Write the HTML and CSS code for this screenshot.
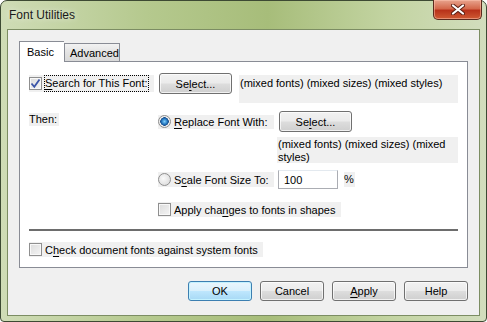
FILE: index.html
```html
<!DOCTYPE html>
<html lang="en">
<head>
  <meta charset="UTF-8">
  <title>Font Utilities</title>
  <link rel="stylesheet" href="styles.css">
</head>
<body>
  <div class="window">
    <div class="titlebar">
      <span class="title">Font Utilities</span>
      <div class="close">
        <svg width="14" height="11" viewBox="0 0 14 11">
          <path d="M2 1.5 L12 9.5 M12 1.5 L2 9.5" stroke="#5a1e12" stroke-width="4" stroke-linecap="round"/>
          <path d="M2 1.5 L12 9.5 M12 1.5 L2 9.5" stroke="#ffffff" stroke-width="2.2" stroke-linecap="round"/>
        </svg>
      </div>
    </div>

    <div class="client">
      <div class="tabs">
        <div class="tab active">Basic</div>
        <div class="tab">Advanced</div>
      </div>

      <div class="panel">
        <div class="search-row">
          <label class="chk search">
            <span class="box">
              <svg width="11" height="11" viewBox="0 0 11 11"><path d="M1.5 5.5 L4.3 8.8 L9.5 1.5" fill="none" stroke="#3b55a8" stroke-width="1.8"/></svg>
            </span>
            <span class="focus-text"><u>S</u>earch for This Font:</span>
          </label>
          <div class="btn select"><span>Se<u>l</u>ect...</span></div>
          <div class="mixed">(mixed fonts) (mixed sizes) (mixed styles)</div>
        </div>

        <div class="then-block">
          <div class="then">Then:</div>
          <div class="options">
            <div class="opt-row">
              <label class="radio-label"><span class="radio on"></span><span><u>R</u>eplace Font With:</span></label>
              <div class="btn select"><span>Se<u>l</u>ect...</span></div>
            </div>
            <div class="mixed mixed2">(mixed fonts) (mixed sizes) (mixed styles)</div>
            <div class="opt-row scale-row">
              <label class="radio-label"><span class="radio"></span><span>S<u>c</u>ale Font Size To:</span></label>
              <input class="field" type="text" value="100">
              <span class="pct">%</span>
            </div>
            <label class="chk shapes"><span class="box"></span><span>Apply cha<u>n</u>ges to fonts in shapes</span></label>
          </div>
        </div>

        <div class="sep"></div>

        <label class="chk doc"><span class="box"></span><span>C<u>h</u>eck document fonts against system fonts</span></label>
      </div>

      <div class="actions">
        <div class="btn default">OK</div>
        <div class="btn">Cancel</div>
        <div class="btn"><span><u>A</u>pply</span></div>
        <div class="btn">Help</div>
      </div>
    </div>
  </div>
</body>
</html>
```

FILE: styles.css
```css
* { box-sizing: border-box; }
body {
  margin: 0;
  font-family: 'Liberation Sans', Arial, sans-serif;
  font-size: 11px;
  color: #000;
  background: #fff;
}
u { text-decoration-thickness: 1px; text-underline-offset: 2px; }

.window {
  width: 487px;
  height: 322px;
  display: flex;
  flex-direction: column;
  padding: 0 6px 5px;
  border: 1px solid #3d4a33;
  border-radius: 7px 7px 4px 4px;
  background: linear-gradient(90deg, #cfdcb6 0%, #b5c98e 30%, #a7bd7a 55%, #c3d4a2 80%, #d2ddbd 100%);
}
.titlebar {
  height: 28px;
  display: flex;
  justify-content: space-between;
  align-items: flex-start;
}
.title {
  padding: 7px 0 0 2px;
  font-size: 12px;
  color: #1a1a1a;
  text-shadow: 0 0 6px rgba(255,255,255,0.8);
}
.close {
  width: 49px;
  height: 20px;
  margin: -1px -2px 0 0;
  display: flex;
  align-items: center;
  justify-content: center;
  border: 1px solid #5b2a1e;
  border-top: none;
  border-radius: 0 0 5px 5px;
  background: linear-gradient(#e8a48e 0%, #d4694c 45%, #b8321a 55%, #cf5a33 100%);
  box-shadow: inset 0 0 0 1px rgba(255,200,180,0.5);
}

.client {
  flex: 1;
  display: flex;
  flex-direction: column;
  padding: 11px 11px 0;
  border: 1px solid #7c8d63;
  background: #f0f0f0;
}

.tabs {
  display: flex;
  align-items: flex-end;
  height: 20px;
}
.tab {
  height: 18px;
  padding: 3px 0 0 5px;
  width: 56px;
  border: 1px solid #898c95;
  border-bottom: none;
  background: linear-gradient(#f2f2f2, #e3e3e3 50%, #d9d9d9);
}
.tab.active {
  width: 45px;
  height: 21px;
  padding: 4px 0 0 7px;
  margin-bottom: -1px;
  border-right: none;
  background: #fff;
  position: relative;
  z-index: 1;
}

.panel {
  height: 207px;
  padding: 11px 8px 0 9px;
  border: 1px solid #898c95;
  background: #fff;
}

.chk, .radio-label, .mixed, .then, .pct {
  background: #f0f0f0;
  white-space: nowrap;
}
.chk {
  display: flex;
  align-items: center;
  gap: 3px;
  height: 15px;
}
.box {
  width: 13px;
  height: 13px;
  flex: none;
  display: flex;
  align-items: center;
  justify-content: center;
  border: 1px solid #8f8f8f;
  background: linear-gradient(135deg, #dcdcdc, #f4f4f4);
  box-shadow: inset 0 0 0 1px #f8f8f8;
}

.search-row {
  display: flex;
  align-items: flex-start;
  height: 30px;
}
.chk.search {
  width: 125px;
  height: 17px;
  margin-top: 2px;
  gap: 2px;
}
.focus-text {
  height: 17px;
  line-height: 16px;
  padding: 0 1px;
  outline: 1px dotted #000;
  outline-offset: -1px;
}

.btn {
  height: 20px;
  width: 64px;
  display: flex;
  align-items: center;
  justify-content: center;
  border: 1px solid #707070;
  border-radius: 3px;
  background: linear-gradient(#f2f2f2 0%, #ebebeb 48%, #dddddd 52%, #cfcfcf 100%);
  box-shadow: inset 0 0 0 1px rgba(255,255,255,0.7);
}
.btn.select {
  width: 73px;
  height: 21px;
  margin-left: 5px;
}
.btn.default {
  border-color: #3c7fb1;
  background: linear-gradient(#eaf6fd 0%, #d9f0fc 48%, #bee6fd 52%, #a7d9f5 100%);
  box-shadow: inset 0 0 0 1px #c4f2ff;
}

.mixed {
  width: 219px;
  height: 28px;
  margin: 2px 0 0 7px;
  padding: 1px 0 0 1px;
  line-height: 14px;
}

.then-block {
  display: flex;
  margin-top: 8px;
}
.then {
  height: 13px;
  line-height: 13px;
  margin-top: 2px;
  width: 30px;
  margin-right: 99px;
}
.options {
  display: flex;
  flex-direction: column;
}
.opt-row {
  display: flex;
  align-items: center;
  height: 21px;
}
.radio-label {
  width: 116px;
  height: 14px;
  display: flex;
  align-items: center;
  gap: 3px;
}
.radio {
  width: 13px;
  height: 13px;
  flex: none;
  border-radius: 50%;
  border: 1px solid #8f8f8f;
  background: radial-gradient(circle at 40% 40%, #fafafa, #d6d6d6);
}
.radio.on {
  background: radial-gradient(circle, #7fd1ff 0, #1f6fb8 3px, #1d4f8a 4px, #f2f2f2 4.5px, #d8d8d8 100%);
}
.mixed.mixed2 {
  width: 181px;
  height: 26px;
  margin: 5px 0 0 119px;
  line-height: 13px;
  white-space: normal;
}
.scale-row {
  height: 19px;
  margin-top: 7px;
}
.scale-row .radio-label { height: 15px; }
.field {
  width: 60px;
  height: 19px;
  margin-left: 4px;
  padding: 0 5px;
  border: 1px solid #abadb3;
  border-top-color: #e3e9ef;
  font: inherit;
}
.pct {
  margin-left: 6px;
  width: 11px;
  height: 15px;
  line-height: 15px;
}
.chk.shapes {
  width: 183px;
  margin-top: 13px;
}

.sep {
  height: 2px;
  width: 429px;
  margin-top: 12px;
  background: #6d6d6d;
}
.chk.doc {
  width: 234px;
  margin-top: 11px;
}

.actions {
  display: flex;
  justify-content: flex-end;
  gap: 8px;
  margin-top: 13px;
}
```
